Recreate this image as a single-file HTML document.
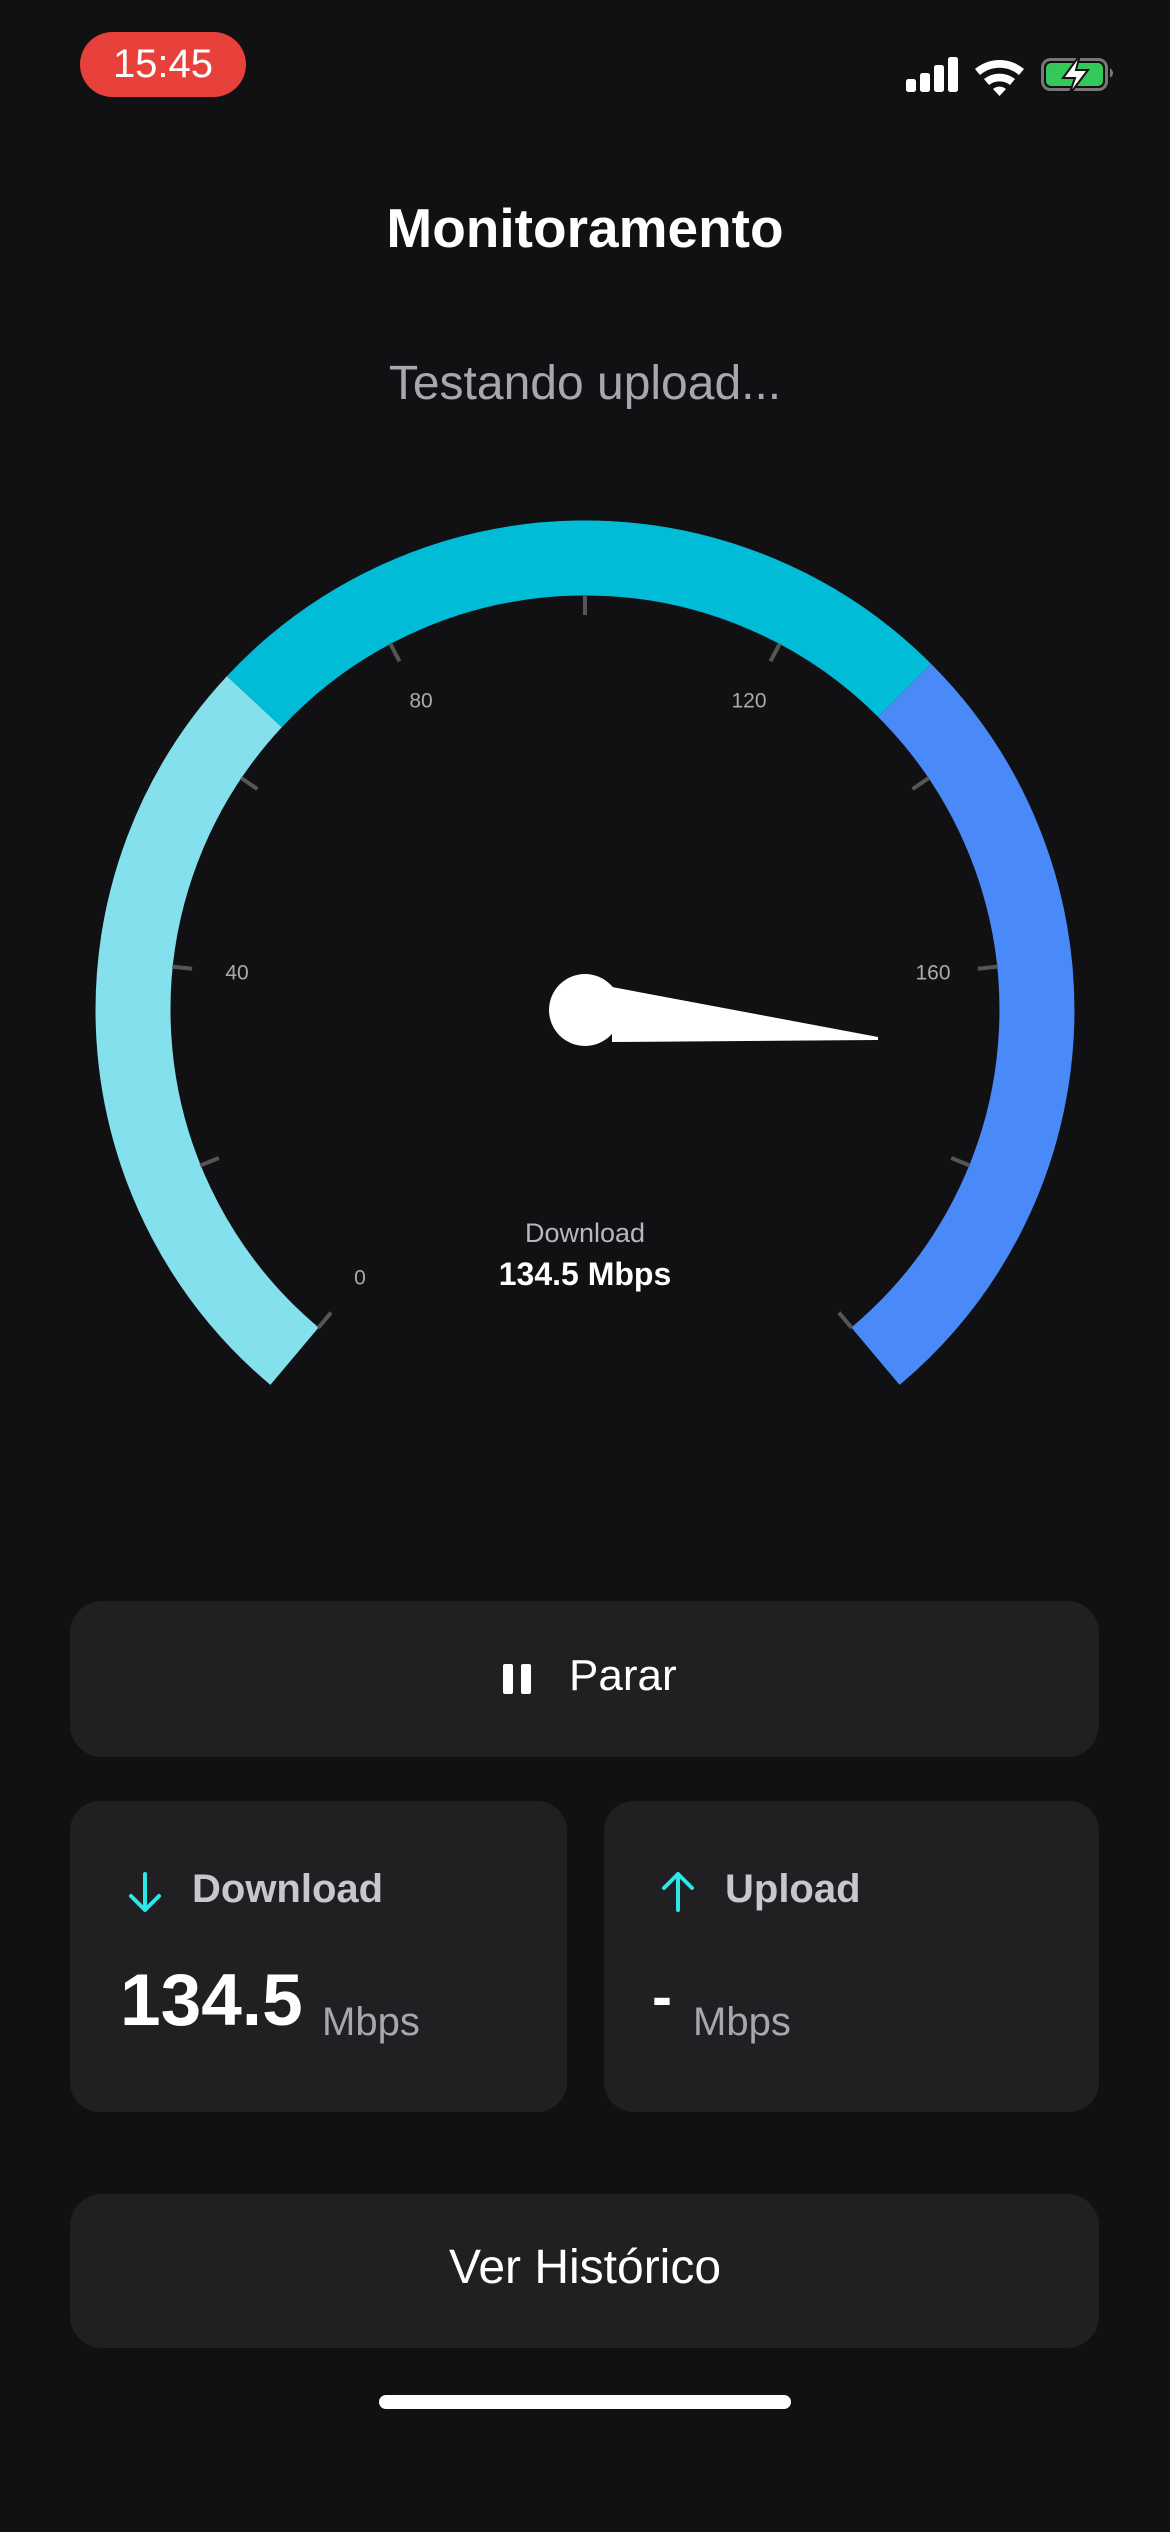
<!DOCTYPE html>
<html><head><meta charset="utf-8">
<style>
html,body{margin:0;padding:0;background:#111114;}
body{width:1170px;height:2532px;position:relative;overflow:hidden;font-family:"Liberation Sans",sans-serif;}
.abs{position:absolute;}
.pill{left:80px;top:32px;width:166px;height:65px;border-radius:33px;background:#e8403a;color:#fff;font-size:40px;line-height:65px;text-align:center;}
.title{left:0;width:1170px;top:196px;text-align:center;color:#fff;font-size:55px;font-weight:bold;}
.sub{left:0;width:1170px;top:356px;text-align:center;color:#a8a8ac;font-size:48px;}
.btn{background:#202023;border-radius:32px;}
.btntxt{color:#fff;font-size:44px;}
.card{background:#202023;border-radius:30px;}
.lbl{color:#c8c8cc;font-size:40px;font-weight:bold;}
.big{color:#fff;font-size:73px;font-weight:bold;}
.unit{color:#a8a8ac;font-size:40px;}
</style></head><body>
<div class="abs pill">15:45</div>
<svg class="abs" style="left:0;top:0" width="1170" height="120">
 <rect x="906" y="79" width="10" height="13" rx="2.5" fill="#fff"/>
 <rect x="920" y="73" width="10" height="19" rx="2.5" fill="#fff"/>
 <rect x="934" y="65" width="10" height="27" rx="2.5" fill="#fff"/>
 <rect x="948" y="57" width="10" height="35" rx="2.5" fill="#fff"/>
 <path d="M975 69 A38 38 0 0 1 1024 69 L1019 75 A30 30 0 0 0 980 75 Z" fill="#fff"/>
 <path d="M984 79 A25 25 0 0 1 1015 79 L1010 85 A17 17 0 0 0 989 85 Z" fill="#fff"/>
 <path d="M993 89 A10 10 0 0 1 1006 89 L999.5 96 Z" fill="#fff"/>
 <rect x="1042.5" y="59.5" width="64" height="30" rx="8" fill="none" stroke="#777" stroke-width="3"/>
 <rect x="1046" y="63" width="57" height="23" rx="5" fill="#34c759"/>
 <path d="M1110 68 Q1116 73 1110 78 Z" fill="#777"/>
 <path d="M1080 55 L1063 78 L1075 78 L1069 95 L1088 70 L1076 70 Z" fill="#fff" stroke="#111114" stroke-width="2"/>
</svg>
<div class="abs title">Monitoramento</div>
<div class="abs sub">Testando upload...</div>

<svg class="abs" style="left:0;top:0" width="1170" height="1450">
 <g fill="none" stroke-width="75">
  <path d="M294.5 1356.2 A452 452 0 0 1 254.4 701.7" stroke="#85e0ee"/>
  <path d="M254.4 701.7 A452 452 0 0 1 904.6 690.4" stroke="#00bcd6"/>
  <path d="M904.6 690.4 A452 452 0 0 1 875.5 1356.2" stroke="#4a8af8"/>
 </g>
 <g stroke="#555" stroke-width="4">
  <line x1="331.1" y1="1312.6" x2="318.2" y2="1327.9"/>
  <line x1="218.8" y1="1158" x2="200.2" y2="1165.5"/>
  <line x1="192.2" y1="968.7" x2="172.3" y2="966.6"/>
  <line x1="257.5" y1="789.1" x2="241" y2="777.9"/>
  <line x1="399.5" y1="661.3" x2="390.2" y2="643.6"/>
  <line x1="585" y1="615" x2="585" y2="595"/>
  <line x1="770.5" y1="661.3" x2="779.8" y2="643.6"/>
  <line x1="912.5" y1="789.1" x2="929" y2="777.9"/>
  <line x1="977.8" y1="968.7" x2="997.7" y2="966.6"/>
  <line x1="951.2" y1="1158" x2="969.8" y2="1165.5"/>
  <line x1="838.9" y1="1312.6" x2="851.8" y2="1327.9"/>
 </g>
 <g fill="#aaa" font-size="21" font-family="Liberation Sans, sans-serif" text-anchor="middle" dominant-baseline="central">
  <text x="360" y="1278">0</text>
  <text x="237" y="973">40</text>
  <text x="421" y="701">80</text>
  <text x="749" y="701">120</text>
  <text x="933" y="973">160</text>
 </g>
 <polygon points="612,987 878,1037 878,1040 612,1042" fill="#fff"/>
 <circle cx="585" cy="1010" r="36" fill="#fff"/>
 <text x="585" y="1242" fill="#b8b8bc" font-size="27" text-anchor="middle" font-family="Liberation Sans, sans-serif">Download</text>
 <text x="585" y="1285" fill="#fff" font-size="32" font-weight="bold" text-anchor="middle" font-family="Liberation Sans, sans-serif">134.5 Mbps</text>
</svg>

<div class="abs btn" style="left:70px;top:1601px;width:1029px;height:156px;"></div>
<div class="abs" style="left:503px;top:1664px;width:10px;height:30px;background:#fff;border-radius:2px"></div>
<div class="abs" style="left:521px;top:1664px;width:10px;height:30px;background:#fff;border-radius:2px"></div>
<div class="abs btntxt" style="left:569px;top:1651px;">Parar</div>

<div class="abs card" style="left:70px;top:1801px;width:497px;height:311px;"></div>
<div class="abs card" style="left:604px;top:1801px;width:495px;height:311px;"></div>
<svg class="abs" style="left:0;top:1862px" width="1170" height="60">
 <g stroke="#2ee6e6" stroke-width="4" fill="none" stroke-linecap="round" stroke-linejoin="round">
  <path d="M145 12 L145 48 M131 34 L145 48 L159 34"/>
  <path d="M678 48 L678 12 M664 26 L678 12 L692 26"/>
 </g>
</svg>
<div class="abs lbl" style="left:192px;top:1867px;">Download</div>
<div class="abs lbl" style="left:725px;top:1867px;">Upload</div>
<div class="abs big" style="left:120px;top:1959px;">134.5</div>
<div class="abs unit" style="left:322px;top:2000px;">Mbps</div>
<div class="abs big" style="left:652px;top:1962px;font-size:60px">-</div>
<div class="abs unit" style="left:693px;top:2000px;">Mbps</div>

<div class="abs btn" style="left:70px;top:2194px;width:1029px;height:154px;"></div>
<div class="abs btntxt" style="left:0;width:1170px;text-align:center;top:2240px;font-size:48px">Ver Histórico</div>

<div class="abs" style="left:379px;top:2395px;width:412px;height:14px;border-radius:7px;background:#fff"></div>
</body></html>
